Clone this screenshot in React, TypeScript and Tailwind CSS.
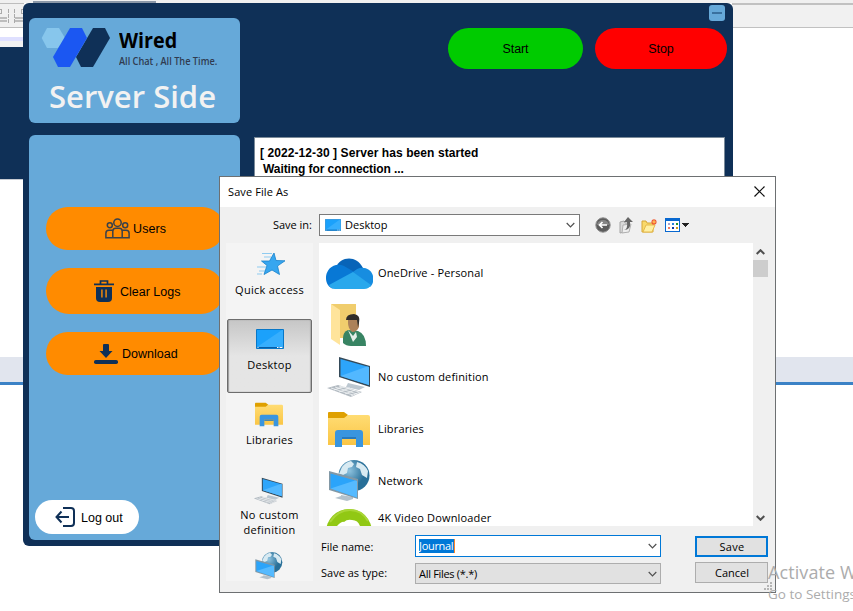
import React from "react";

const ui = "font-['Open_Sans','Noto_Sans',sans-serif] text-[11px] leading-[15px] text-black whitespace-nowrap";
const arial = "font-['Liberation_Sans',Arial,sans-serif] text-[12.5px] leading-[15px] text-black whitespace-nowrap";

function Backdrop() {
  return (
    <div className="flex h-[611px] flex-col bg-white">
      <div className="h-[3px] shrink-0 bg-[#f0f0f0] pl-[33px] pt-px">
        <div className="h-[2px] w-[123px] bg-[#8b98a8]" />
      </div>
      <div className="flex h-[177px] shrink-0 justify-between">
        <div className="flex w-[24px] flex-col">
          <svg className="h-[25px] w-[24px] shrink-0 bg-[#f0f0f0]" viewBox="0 0 24 25" shapeRendering="crispEdges">
            <path d="M0 .5h24M0 24.5h24" stroke="#bdbdbd" />
            <path d="M0 15h7M15 15h9M0 18h7M15 18h9" stroke="#bdbdbd" strokeWidth="2" />
            <path d="M0 6.500h1.500v4H0M24 6.500h-2.500v4H24" stroke="#aaa" fill="none" />
            <path d="M8.500 6v15M14.500 6v15" stroke="#aaa" strokeDasharray="4 1" />
          </svg>
          <div className="h-[9px] shrink-0 bg-white" />
          <div className="h-[4px] shrink-0 bg-[#dfe0ff]" />
          <div className="h-[6px] shrink-0 bg-[#f1f1f1]" />
          <div className="grow border-b border-[#c6cbd2] bg-[#0f3057]" />
        </div>
        <div className="w-[121px]">
          <div className="h-[25px] border-b border-t-2 border-[#c1c1c1] bg-[#f1f1f1]" />
        </div>
      </div>
      <div className="mt-[177px] h-[28px] shrink-0 border-b-[3px] border-[#3b82c6] bg-[#e1e5ee]" />
    </div>
  );
}

function Logo() {
  return (
    <svg className="h-[41px] w-[70px]" viewBox="0 0 70 41">
      <path d="M6 0h12l6 10-7 10H6L.700 10z" fill="#87c6ec" />
      <path d="M52 0h12l5 10-17 29H40l-5-10z" fill="#0f3057" />
      <path d="M29 0h12l5 10-17 29H17l-5-10z" fill="#1b57f2" />
    </svg>
  );
}

function UsersIcon() {
  return (
    <svg className="h-[21px] w-[25px]" viewBox="0 0 25 21" fill="none" stroke="#3a4149" strokeWidth="1.5">
      <circle cx="12.500" cy="4.700" r="3.700" />
      <circle cx="4.800" cy="7.300" r="2.500" />
      <circle cx="20.200" cy="7.300" r="2.500" />
      <path d="M7.800 19.800v-6.500q0-3 3-3h3.400q3 0 3 3v6.500zM7.800 19.800H.900v-4.500q0-3 3-3h4M17.200 19.800h6.900v-4.500q0-3-3-3h-4" />
    </svg>
  );
}

function TrashIcon() {
  return (
    <svg className="h-[22px] w-[20px]" viewBox="0 0 20 22">
      <path d="M0 4.300h20M6.500 4V1h7v3" stroke="#0f3057" strokeWidth="1.700" fill="none" />
      <path d="M2 7h16v11q0 4-4 4H6q-4 0-4-4z" fill="#0f3057" />
      <path d="M7 9.500h1.800v8H7zM11.200 9.500H13v8h-1.800z" fill="#c87918" />
    </svg>
  );
}

function DownloadIcon() {
  return (
    <svg className="h-[20px] w-[24px]" viewBox="0 0 24 20" fill="#0f3057">
      <path d="M9 1q0-1 1-1h4q1 0 1 1v6h3.500L12 14 5.500 7H9z" />
      <rect y="16" width="24" height="4" rx="1.800" />
    </svg>
  );
}

function LogoutIcon() {
  return (
    <svg className="h-[20px] w-[20px]" viewBox="0 0 20 20" fill="none" stroke="#0f3057" strokeWidth="2">
      <path d="M8 1h8q3 0 3 3v12q0 3-3 3H8M14 10H1.500M6.500 4.500L1.500 10l5 5.500" />
    </svg>
  );
}

function ServerWindow() {
  return (
    <div className="absolute left-[23px] top-[3px] flex h-[543px] w-[710px] gap-[14px] rounded-[6px] bg-[#0f3057] px-[6px] pb-[6px]">
      <div className="flex w-[211px] shrink-0 flex-col gap-[12px] pt-[15px]">
        <div className="h-[105px] shrink-0 rounded-[6px] bg-[#66a9d9] pl-[12px] pt-[10px]">
          <div className="flex h-[45px] gap-[8px]">
            <Logo />
            <div className="font-['Open_Sans','Noto_Sans',sans-serif] whitespace-nowrap">
              <div className="h-[26px] origin-left scale-x-[.94] text-[21px] font-bold leading-[25px] text-black">Wired</div>
              <div className="origin-left scale-x-[.92] text-[10px] font-semibold leading-[14px] text-[#303b50]">All Chat , All The Time.</div>
            </div>
          </div>
          <div className="pl-[8px] font-['Open_Sans','Noto_Sans',sans-serif] text-[31px] font-semibold leading-[47px] text-[#f2f2f2] whitespace-nowrap">Server Side</div>
        </div>
        <div className={`flex h-[405px] flex-col rounded-[6px] bg-[#66a9d9] pt-[72px] ${arial}`}>
          <button className="ml-[17px] flex h-[43px] w-[178px] items-center gap-[3px] rounded-full bg-[#ff8b00] pl-[59px]"><UsersIcon /><span className="pt-[2px] tracking-[.1px]">Users</span></button>
          <button className="ml-[17px] mt-[18px] flex h-[46px] w-[178px] items-center gap-[6px] rounded-full bg-[#ff8b00] pl-[48px]"><TrashIcon /><span className="pt-[2px]">Clear Logs</span></button>
          <button className="ml-[17px] mt-[18px] flex h-[43px] w-[178px] items-center gap-[4px] rounded-full bg-[#ff8b00] pl-[48px]"><DownloadIcon /><span className="pt-[2px]">Download</span></button>
          <button className="ml-[6px] mt-[125px] flex h-[34px] w-[104px] items-center gap-[6px] rounded-full bg-white pl-[20px]"><LogoutIcon /><span className="pt-[2px]">Log out</span></button>
        </div>
      </div>
      <div className="flex w-[473px] flex-col">
        <div className="flex h-[25px] justify-end pr-[2px] pt-[2px]">
          <div className="flex h-[16px] w-[16px] items-center justify-center rounded-[3px] bg-[#66a9d9]">
            <div className="h-[2px] w-[10px] bg-[#3a719f]" />
          </div>
        </div>
        <div className={`flex h-[41px] gap-[12px] pl-[194px] ${arial}`}>
          <button className="w-[135px] shrink-0 rounded-full bg-[#00cb00] pt-[2px] tracking-[-.1px]">Start</button>
          <button className="w-[132px] shrink-0 rounded-full bg-[#ff0000] pt-[2px] tracking-[-.1px]">Stop</button>
        </div>
        <div className="mt-[68px] h-[260px] w-[471px] border border-[#7a8a99] bg-white pl-[5px] pt-[7px] font-['Liberation_Sans',Arial,sans-serif] text-[12px] font-bold leading-[16px] text-black whitespace-pre">
          <div className="tracking-[.08px]">[ 2022-12-30 ] Server has been started</div>
          <div className="pl-[3px] tracking-[-.08px]">Waiting for connection ...</div>
        </div>
      </div>
    </div>
  );
}

function DesktopIcon({ className }: { className: string }) {
  return (
    <svg className={className} viewBox="0 0 28 20" preserveAspectRatio="none">
      <path d="M.5.5h27v19H.5z" fill="#1ba1fb" stroke="#0877c7" />
      <path d="M1 18L26 1h1v17z" fill="#36aefd" />
      <path d="M1 18.500h26" stroke="#075da7" />
      <path d="M1.500 18.500h1M21 18.500h1.500M23.500 18.500h3" stroke="#fff" />
    </svg>
  );
}

function LibrariesIcon({ className }: { className: string }) {
  return (
    <svg className={className} viewBox="0 0 42 35">
      <defs>
        <linearGradient id="folder" x2="0" y2="1"><stop stopColor="#ffdc73" /><stop offset="1" stopColor="#fac545" /></linearGradient>
      </defs>
      <path d="M0 1q0-1 1-1h15l4 3-3 4H0z" fill="#dfa000" />
      <path d="M0 6h16l4-3h20q2 0 2 2v28H0z" fill="url(#folder)" />
      <path d="M7 35V21q0-3 3-3h22q3 0 3 3v14h-7V25H14v10z" fill="#3995df" />
      <path d="M14 25h14v2H14z" fill="#2879bb" />
    </svg>
  );
}

function ComputerIcon({ className }: { className: string }) {
  return (
    <svg className={className} viewBox="0 0 44 42">
      <path d="M21 27l17 4-6 3-13-3z" fill="#bcc7d0" />
      <path d="M12 1l31 9v21L12 21z" fill="#354a59" />
      <path d="M13.500 3L42 11v18L13.500 20z" fill="#2da5fb" />
      <path d="M13.500 20L40 10.500l2 .5v18z" fill="#52b8ff" />
      <path d="M0 32l11-3 24 7-11 5z" fill="#b3bbc2" />
      <path d="M4 32l22 7M8 31l22 7M12 30l20 6M7 34l11-4M12 36l11-4M18 38l10-4M24 40l9-4" stroke="#f4f6f7" strokeWidth=".8" />
    </svg>
  );
}

function NetworkIcon({ className }: { className: string }) {
  return (
    <svg className={className} viewBox="0 0 41 42">
      <defs>
        <radialGradient id="globe" cx=".35" cy=".35"><stop stopColor="#8fc3df" /><stop offset="1" stopColor="#286f98" /></radialGradient>
      </defs>
      <circle cx="25" cy="15.500" r="15.500" fill="url(#globe)" />
      <path d="M13 7q4-5 9-6l3 3-2 3-4 1-1 5-4 2-4-1M28 2q8 2 11 9l-1 7-5-3-2-6-4-2z" fill="#d8eaf2" />
      <path d="M12 35l12 2v2l-6 2-12-3 6-2z" fill="#b3c1cb" />
      <path d="M0 11l29 8v20L0 30z" fill="#8298a6" />
      <path d="M1.500 13.500L28 21v16.500L1.500 28.500z" fill="#2ba4fa" />
      <path d="M1.500 28.500L26 20.500l2 .5v16.500z" fill="#55baff" />
    </svg>
  );
}

function QuickIcon() {
  return (
    <svg className="h-[24px] w-[30px]" viewBox="0 0 30 24">
      <path d="M6 1.500h10M8 5h7M1 15h9M3 19h7M1 22h5" stroke="#8fcbf0" strokeWidth="1" />
      <path d="M18 1l2 7.500 9 .3-7.500 5.200 2 8.500-7.500-4.500-8 4.500 3-9L5.500 9h8z" fill="#37a6ef" stroke="#1681cc" strokeWidth=".8" />
    </svg>
  );
}

function OneDriveIcon() {
  return (
    <svg className="h-[31px] w-[48px]" viewBox="0 0 48 31">
      <path d="M11 9C15-1 31-4 38 10L29 18z" fill="#0864b8" />
      <path d="M9 31C-2 29-2 10 11 7q4-1 8 1l12 7-24 15z" fill="#0878d5" />
      <path d="M27 15q6-6 12-5c10 1 12 14 6 19z" fill="#178de0" />
      <path d="M4 27l24-13 18 13q-2 4-7 4H10q-4 0-6-4z" fill="#29a8ec" />
    </svg>
  );
}

function UserFolderIcon() {
  return (
    <svg className="h-[43px] w-[36px]" viewBox="0 0 36 43">
      <path d="M0 0h25v34H8z" fill="#f0cd6d" />
      <path d="M0 0l9 6v35l-9-6z" fill="#ffe49b" />
      <path d="M12 39v-5q0-6 5-8l10 1q8 3 8 15H20q-5 0-8-3z" fill="#388463" />
      <path d="M17 26l5 6 3-4 1 5-4 5z" fill="#e4eee8" />
      <path d="M17 15q4-4 11-1v9q-2 5-7 5-4-4-4-9z" fill="#ac8159" />
      <path d="M15 16q0-6 8-6 7 1 5 9l-1 4-1-7z" fill="#302d2a" />
    </svg>
  );
}

function DownloaderIcon() {
  return (
    <svg className="h-[17px] w-[46px]" viewBox="0 0 46 17">
      <circle cx="23" cy="23" r="23" fill="#91c814" />
      <path d="M4 13Q12 1 24 1q12 0 18 11" fill="none" stroke="#a9d637" strokeWidth="2" />
      <path d="M11 17q5-5 7-4 3-3 8-2 6 0 8 6z" fill="#fff" />
    </svg>
  );
}

function Chevron({ up = false, bold = false }: { up?: boolean; bold?: boolean }) {
  return (
    <svg className="h-[6px] w-[9px] shrink-0" viewBox="0 0 9 6" fill="none" stroke="#505050" strokeWidth={bold ? 2 : 1.2}>
      <path d={up ? "M.7 5l3.800-3.800L8.300 5" : "M.7 1l3.800 3.800L8.300 1"} />
    </svg>
  );
}

function Toolbar() {
  return (
    <div className="flex items-center">
      <svg className="h-[16px] w-[16px]" viewBox="0 0 16 16">
        <circle cx="8" cy="8" r="7.200" fill="#5c5c5c" stroke="#8e8e8e" />
        <path d="M2 8a6 5 0 0 1 12 0z" fill="#858585" />
        <path d="M12 8H4.500M7.500 5L4.500 8l3 3" stroke="#fff" strokeWidth="1.700" fill="none" />
      </svg>
      <svg className="ml-[8px] h-[17px] w-[14px]" viewBox="0 0 14 17">
        <path d="M1 5l4-1 1 2h4v8l-9 2z" fill="#d9d9d9" stroke="#a4a4a4" />
        <path d="M3 16l1-8 8-1-2 8z" fill="#eee" stroke="#b0b0b0" />
        <path d="M5 13q4-1 3-8H5l4-5 5 5h-3q1 8-6 8z" fill="#666" />
      </svg>
      <svg className="ml-[8px] h-[15px] w-[17px]" viewBox="0 0 17 15">
        <path d="M1 14V3h4l1 2h6v9z" fill="#f9d96a" stroke="#d6a636" />
        <path d="M2 14l3-7h9l-3 7z" fill="#fff0a3" stroke="#e5b94a" />
        <path d="M13 1v6M10 4h6M11 2l4 4M15 2l-4 4" stroke="#ee5830" strokeWidth="1.200" />
        <circle cx="13" cy="4" r="1.400" fill="#ffb44c" />
      </svg>
      <svg className="ml-[7px] h-[14px] w-[24px]" viewBox="0 0 24 14" shapeRendering="crispEdges">
        <path d="M.5.5h14v13H.5z" fill="#fff" stroke="#0868d0" />
        <path d="M0 0h15v3H0z" fill="#0868d0" />
        <path d="M3 5h2v2H3z" fill="#aaa4cd" /><path d="M7 5h2v2H7z" fill="#2484e0" /><path d="M11 5h2v2h-2z" fill="#20942d" />
        <path d="M3 9h2v2H3z" fill="#f07b62" /><path d="M7 9h2v2H7z" fill="#0b37a1" /><path d="M11 9h2v2h-2z" fill="#cf9c1e" />
        <path d="M17 5h7l-3.500 4z" fill="#222" />
      </svg>
    </div>
  );
}

function FileRow({ icon, label }: { icon: React.ReactNode; label: string }) {
  return (
    <div className="flex h-[52px] shrink-0 items-center">
      <div className="flex w-[59px] justify-center pl-px">{icon}</div>
      <span className="pb-px tracking-[.16px]">{label}</span>
    </div>
  );
}

function Place({ icon, label, active = false }: { icon: React.ReactNode; label?: React.ReactNode; active?: boolean }) {
  return (
    <div className={active
      ? "flex h-[74px] w-[85px] shrink-0 flex-col items-center rounded-[2px] border border-[#6d6d6d] bg-linear-to-b from-[#c6c6c6] to-[#e5e5e5] to-50% pt-[9px] text-center shadow-[inset_1px_0_1px_#999,inset_-1px_0_1px_#aaa]"
      : "flex h-[75px] w-[85px] shrink-0 flex-col items-center pt-[10px] text-center"}>
      <div className={active ? "flex h-[28px] shrink-0 items-start" : "-mt-px flex h-[30px] shrink-0 items-start pr-[2px]"}>{icon}</div>
      <div className="tracking-[.3px]">{label}</div>
    </div>
  );
}

function SaveDialog() {
  return (
    <div className={`absolute left-[219px] top-[176px] flex h-[417px] w-[557px] flex-col border border-[#6d7072] bg-[#f0f0f0] ${ui}`}>
      <div className="flex h-[30px] shrink-0 items-center justify-between bg-white pb-[2px] pl-[8px] pr-[10px]">
        <span className="tracking-[.1px]">Save File As</span>
        <svg className="h-[11px] w-[11px]" viewBox="0 0 11 11" stroke="#111" strokeWidth="1.200"><path d="M.5.5l10 10M10.500.5l-10 10" /></svg>
      </div>
      <div className="flex h-[36px] shrink-0 items-center">
        <span className="w-[99px] pb-px pr-[7px] text-right">Save in:</span>
        <div className="flex h-[22px] w-[261px] items-center border border-[#7a7a7a] bg-white pl-[5px] pr-[4px]">
          <DesktopIcon className="h-[12px] w-[16px]" />
          <span className="ml-[4px] grow pb-px">Desktop</span>
          <Chevron />
        </div>
        <div className="pl-[15px]"><Toolbar /></div>
      </div>
      <div className="flex grow pl-[6px] pr-[7px]">
        <div className="h-[338px] w-[87px] shrink-0 overflow-hidden bg-[#f4f4f4] pl-px">
          <Place icon={<span className="pl-[4px]"><QuickIcon /></span>} label="Quick access" />
          <div className="h-px" />
          <Place active icon={<DesktopIcon className="h-[20px] w-[28px]" />} label="Desktop" />
          <Place icon={<LibrariesIcon className="h-[25px] w-[28px]" />} label="Libraries" />
          <Place icon={<ComputerIcon className="h-[28px] w-[31px]" />} label={<>No custom<br />definition</>} />
          <Place icon={<NetworkIcon className="h-[28px] w-[28px]" />} />
        </div>
        <div className="ml-[6px] flex w-[449px] shrink-0 flex-col">
          <div className="flex h-[283px] shrink-0 bg-white">
            <div className="flex grow flex-col overflow-hidden pt-[4px]">
              <FileRow icon={<OneDriveIcon />} label="OneDrive - Personal" />
              <FileRow icon={<UserFolderIcon />} label="" />
              <FileRow icon={<ComputerIcon className="h-[42px] w-[44px]" />} label="No custom definition" />
              <FileRow icon={<LibrariesIcon className="h-[35px] w-[42px]" />} label="Libraries" />
              <FileRow icon={<NetworkIcon className="h-[42px] w-[41px]" />} label="Network" />
              <div className="flex shrink-0 items-start pt-[2px]">
                <div className="flex w-[59px] justify-center"><DownloaderIcon /></div>
                <span className="pt-px tracking-[.16px]">4K Video Downloader</span>
              </div>
            </div>
            <div className="flex w-[15px] shrink-0 flex-col items-center bg-[#f0f0f0] pb-[5px] pt-[6px]">
              <Chevron up bold />
              <div className="mt-[5px] h-[17px] w-full bg-[#cdcdcd]" />
              <div className="grow" />
              <Chevron bold />
            </div>
          </div>
          <div className="flex pt-[9px]">
            <div className="flex w-[96px] flex-col gap-[11px] pl-[2px] pt-[4px]">
              <span>File name:</span>
              <span>Save as type:</span>
            </div>
            <div className="flex w-[246px] flex-col gap-[6px]">
              <div className="flex h-[22px] items-center justify-between border border-[#0078d7] bg-white px-[3px]">
                <span className="h-[14px] w-[36px] border-r border-[#ff8728] bg-[#0078d7] leading-[14px] tracking-[-.3px] text-white">Journal</span>
                <Chevron />
              </div>
              <div className="flex h-[21px] items-center justify-between border border-[#adadad] bg-[#e1e1e1] px-[3px]">
                <span className="tracking-[-.3px]">All Files (*.*)</span>
                <Chevron />
              </div>
            </div>
            <div className="ml-[34px] flex w-[73px] flex-col gap-[5px] pt-px">
              <button className="h-[21px] border-2 border-[#0078d7] bg-[#e1e1e1] pl-px leading-[17px] tracking-[.3px]">Save</button>
              <button className="h-[21px] border border-[#adadad] bg-[#e1e1e1] pl-px leading-[19px]">Cancel</button>
            </div>
          </div>
        </div>
      </div>
      <svg className="absolute bottom-[2px] right-[3px] h-[8px] w-[8px]" viewBox="0 0 8 8" fill="#b5b5b5">
        <path d="M6 0h2v2H6zM3 3h2v2H3zM6 3h2v2H6zM0 6h2v2H0zM3 6h2v2H3zM6 6h2v2H6z" />
      </svg>
    </div>
  );
}

export default function App() {
  return (
    <div className="relative h-[611px] w-[853px] overflow-hidden">
      <Backdrop />
      <ServerWindow />
      <SaveDialog />
      <div className="absolute left-[768px] top-[560px] font-['Open_Sans','Noto_Sans',sans-serif] text-[#acacac] whitespace-nowrap">
        <div className="text-[18px] leading-[24px] tracking-[.1px]">Activate Windows</div>
        <div className="text-[13.500px] leading-[20px]">Go to Settings to activate Windows.</div>
      </div>
    </div>
  );
}
